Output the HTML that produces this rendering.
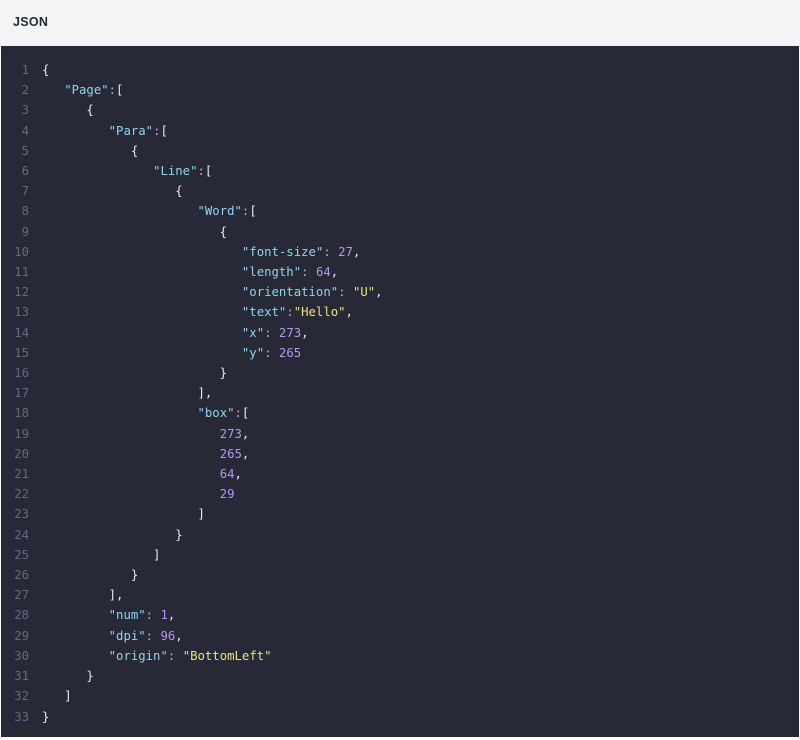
<!DOCTYPE html>
<html><head><meta charset="utf-8"><style>
html,body{margin:0;padding:0;background:#fff;width:800px;height:740px;overflow:hidden}
.hdr{position:absolute;left:0;top:0;width:800px;height:46px;background:#f3f4f6;}
.hdr span{position:absolute;left:13px;top:15px;font:bold 12.5px "Liberation Sans",sans-serif;color:#1f2937;letter-spacing:0.3px}
.panel{position:absolute;left:1px;top:46px;width:798px;height:691px;background:#272a36}
.ln{position:absolute;left:0;top:14px;width:28px;text-align:right;color:#5f6b85}
.code{position:absolute;left:41px;top:14px;color:#e8e8ee}
pre{margin:0;font:12.3px/20.2px "DejaVu Sans Mono","Liberation Mono",monospace;white-space:pre}
.k{color:#8fd3f3}.p{color:#c89ad8}.n{color:#b794f4}.s{color:#e9e27a}
</style></head><body>
<div class="hdr"><span>JSON</span></div>
<div class="panel">
<pre class="ln">1
2
3
4
5
6
7
8
9
10
11
12
13
14
15
16
17
18
19
20
21
22
23
24
25
26
27
28
29
30
31
32
33</pre>
<pre class="code">{
   <span class="k">"Page"</span><span class="p">:</span>[
      {
         <span class="k">"Para"</span><span class="p">:</span>[
            {
               <span class="k">"Line"</span><span class="p">:</span>[
                  {
                     <span class="k">"Word"</span><span class="p">:</span>[
                        {
                           <span class="k">"font-size"</span><span class="p">:</span> <span class="n">27</span>,
                           <span class="k">"length"</span><span class="p">:</span> <span class="n">64</span>,
                           <span class="k">"orientation"</span><span class="p">:</span> <span class="s">"U"</span>,
                           <span class="k">"text"</span><span class="p">:</span><span class="s">"Hello"</span>,
                           <span class="k">"x"</span><span class="p">:</span> <span class="n">273</span>,
                           <span class="k">"y"</span><span class="p">:</span> <span class="n">265</span>
                        }
                     ],
                     <span class="k">"box"</span><span class="p">:</span>[
                        <span class="n">273</span>,
                        <span class="n">265</span>,
                        <span class="n">64</span>,
                        <span class="n">29</span>
                     ]
                  }
               ]
            }
         ],
         <span class="k">"num"</span><span class="p">:</span> <span class="n">1</span>,
         <span class="k">"dpi"</span><span class="p">:</span> <span class="n">96</span>,
         <span class="k">"origin"</span><span class="p">:</span> <span class="s">"BottomLeft"</span>
      }
   ]
}</pre>
</div>
</body></html>
